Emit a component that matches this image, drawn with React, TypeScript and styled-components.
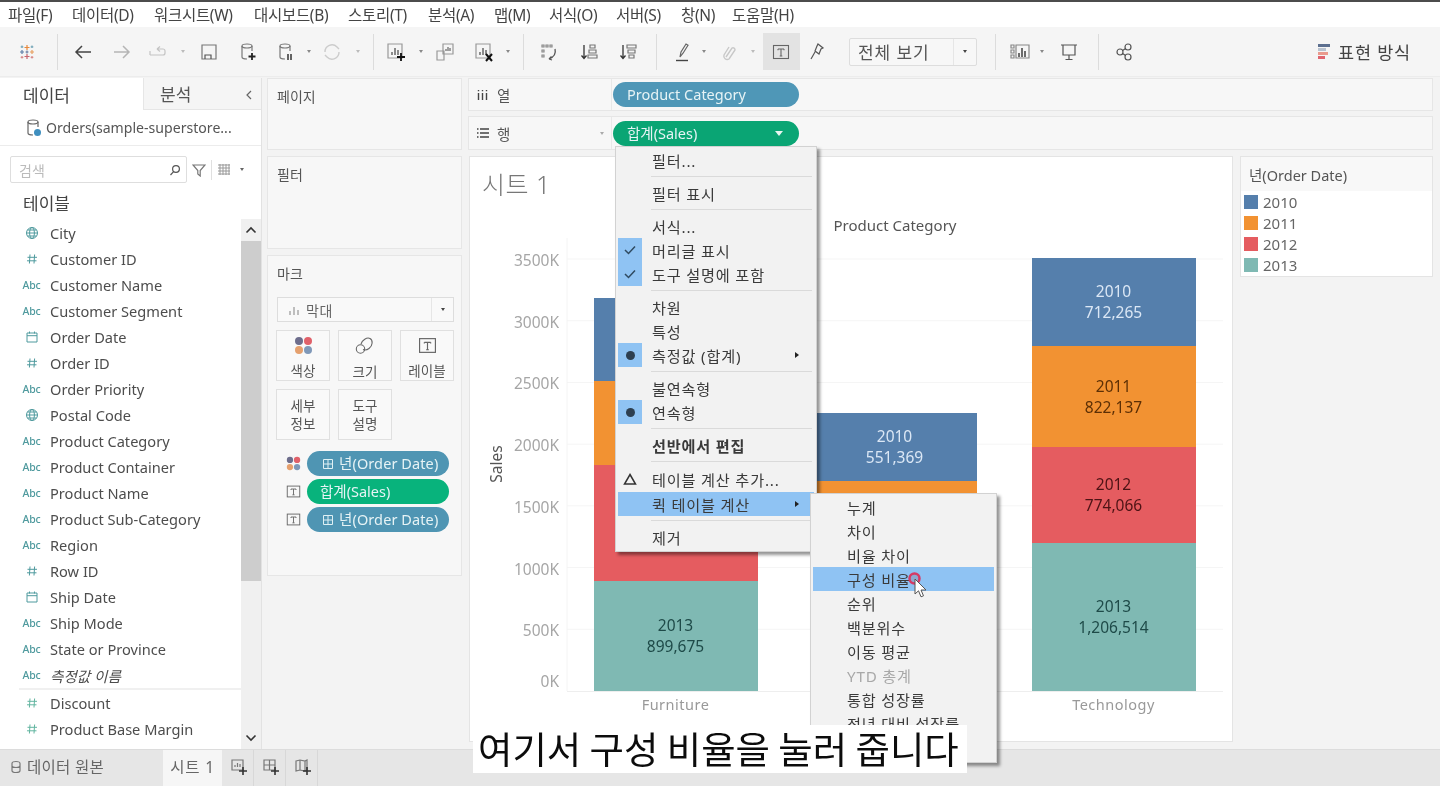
import React from "react";
import styled, { createGlobalStyle } from "styled-components";

const FONT = `"Noto Sans", "Noto Sans CJK KR", sans-serif`;
const C = { blue: "#557fac", orange: "#f29232", red: "#e55c60", teal: "#7fb9b3" };

const Global = createGlobalStyle`
  html, body { margin: 0; padding: 0; background: #f3f3f3; }
  * { box-sizing: border-box; }
  #root { width: 1440px; height: 786px; overflow: hidden; }
`;

const Page = styled.div`
  position: relative; width: 1440px; height: 786px; overflow: hidden;
  display: flex; flex-direction: column; background: #f3f3f3;
  font-family: ${FONT}; color: #444; border-top: 2px solid #4c4c4c;
  filter: blur(0.4px);
`;

/* ---------- menu bar ---------- */
const MenuBar = styled.div`
  height: 25px; background: #fff; display: flex; align-items: center; padding-left: 8px; flex: none;
`;
const MenuItem = styled.span<{ $w: number }>`
  width: ${p => p.$w}px; font-size: 15.5px; color: #444; white-space: nowrap; flex: none; letter-spacing: -0.3px;
`;

/* ---------- toolbar ---------- */
const Toolbar = styled.div`
  height: 50px; flex: none; background: #f5f5f5; display: flex; align-items: center; padding-left: 8px;
  border-bottom: 1px solid #ececec;
`;
const Slot = styled.div<{ $w: number }>`
  width: ${p => p.$w}px; height: 37px; flex: none; display: flex; align-items: center; justify-content: center;
  svg { flex: none; }
`;
const ActiveTool = styled.div`
  width: 37px; height: 37px; flex: none; background: #e3e3e3; display: flex; align-items: center; justify-content: center;
`;
const ToolSep = styled.div`width: 1px; height: 36px; background: #dcdcdc; flex: none;`;
const TinyCaret = styled.span<{ $c?: string; $ml?: number }>`
  width: 0; height: 0; flex: none; border-left: 2.5px solid transparent; border-right: 2.5px solid transparent;
  border-top: 3px solid ${p => p.$c || "#888"}; margin-left: ${p => p.$ml ?? 0}px;
`;
const FitSelect = styled.div`
  width: 128px; height: 28px; margin-left: 19px; flex: none; background: #f7f7f7; border: 1px solid #ddd; border-radius: 2px;
  display: flex; align-items: center; font-size: 17px; color: #555; letter-spacing: 0.9px;
`;
const FitLabel = styled.span`flex: 1; padding-left: 8px; padding-bottom: 1px;`;
const FitArrow = styled.span`
  width: 23px; height: 100%; border-left: 1px solid #e6e6e6; display: flex; align-items: center; justify-content: center;
`;
const ShowMe = styled.div`
  margin-left: auto; margin-right: 29px; display: flex; align-items: center; gap: 8px;
  font-size: 17.5px; color: #444; letter-spacing: 0.8px;
`;

/* ---------- body ---------- */
const Body = styled.div`flex: 1; display: flex; min-height: 0; padding-top: 1px;`;

const Sidebar = styled.aside`
  width: 262px; flex: none; background: #fff; border-right: 1px solid #e2e2e2; display: flex; flex-direction: column;
`;
const Tabs = styled.div`display: flex; height: 32px; flex: none;`;
const TabA = styled.div`
  width: 143px; padding-left: 23px; font-size: 17px; color: #444; line-height: 35px;
`;
const TabB = styled.div`
  flex: 1; background: #f5f5f5; border-left: 1px solid #e6e6e6; border-bottom: 1px solid #e6e6e6;
  padding-left: 16px; padding-right: 7px; font-size: 17px; color: #555; line-height: 34px; padding-top: 2px;
  display: flex; justify-content: space-between; align-items: center;
`;
const Source = styled.div`
  height: 36px; flex: none; border-bottom: 1px solid #ececec; display: flex; align-items: center;
  padding-left: 24px; gap: 2px; font-size: 14.1px; color: #555; white-space: nowrap;
`;
const SearchRow = styled.div`
  height: 44px; flex: none; display: flex; align-items: center; padding-left: 10px; padding-top: 3px;
`;
const SearchBox = styled.div`
  width: 177px; height: 27px; border: 1px solid #dedede; border-radius: 2px; display: flex; align-items: center;
  justify-content: space-between; padding: 0 5px 0 8px; font-size: 14px; color: #bbb;
`;
const SearchTools = styled.div`display: flex; align-items: center; margin-left: 5px;`;
const VSep = styled.span`width: 1px; height: 20px; background: #e0e0e0; margin: 0 6px 0 5px;`;
const TableHead = styled.div`
  height: 30px; flex: none; padding-left: 23px; font-size: 17px; color: #444; line-height: 28px;
`;
const ListWrap = styled.div`flex: 1; display: flex; min-height: 0;`;
const List = styled.div`width: 241px; flex: none;`;
const Field = styled.div<{ $it?: boolean }>`
  height: 26px; display: flex; align-items: center; font-size: 14.6px; color: #4d4d4d; white-space: nowrap;
  font-style: ${p => (p.$it ? "italic" : "normal")};
`;
const TypeIcon = styled.span<{ $c?: string }>`
  width: 50px; flex: none; padding-left: 23px; padding-right: 10px; display: flex; justify-content: center;
  align-items: center; font-size: 10.5px; font-style: normal; font-weight: 500; color: ${p => p.$c || "#4f9a9e"};
  letter-spacing: -0.2px;
`;
const ListRule = styled.div`height: 2px; background: #f0f0f0; margin-left: 19px;`;
const ScrollTrack = styled.div`
  width: 20px; flex: none; background: #f0f0f0; display: flex; flex-direction: column; margin-top: -1px;
`;
const ScrollBtn = styled.div<{ $end?: boolean }>`
  height: 22px; flex: none; display: flex; align-items: center; justify-content: center;
  margin-top: ${p => (p.$end ? "auto" : "0")};
`;
const ScrollThumb = styled.div`height: 340px; flex: none; background: #cdcdcd;`;

const ShelfCol = styled.div`
  width: 195px; flex: none; margin-left: 5px; display: flex; flex-direction: column; gap: 6px;
`;
const Card = styled.section<{ $h: number }>`
  height: ${p => p.$h}px; flex: none; background: #f7f7f7; border: 1px solid #e6e6e6;
  padding: 9px 9px; font-size: 14px; color: #555;
`;
const CardTitle = styled.div`line-height: 18px;`;
const MarkSelect = styled.div`
  margin-top: 14px; margin-right: -2px; height: 25px; background: #f9f9f9; border: 1px solid #ddd; display: flex; align-items: center;
  font-size: 14px; color: #666;
`;
const MarkName = styled.span`flex: 1; display: flex; align-items: center; gap: 6px; padding-left: 10px; letter-spacing: .5px;`;
const MarkArrow = styled.span`width: 22px; height: 100%; border-left: 1px solid #e6e6e6; display: flex; align-items: center; justify-content: center;`;
const MarkGrid = styled.div`
  display: grid; grid-template-columns: repeat(3, 54px); grid-auto-rows: 51px; column-gap: 8px; row-gap: 8px; margin-top: 8px; margin-left: -1px;
`;
const MarkBtn = styled.div`
  background: #f9f9f9; border: 1px solid #e0e0e0; display: flex; flex-direction: column; align-items: center;
  justify-content: center; font-size: 13.5px; color: #555; line-height: 18px; text-align: center;
`;
const MarkIconWrap = styled.div`height: 20px; margin-top: 5px; margin-bottom: 7px; display: flex; align-items: center; justify-content: center;`;
const MarkPills = styled.div`display: flex; flex-direction: column; gap: 3px; margin-top: 11px;`;
const MarkRow = styled.div`display: flex; align-items: center; gap: 6px; padding-left: 9px;`;
const Pill = styled.div<{ $bg: string; $w: number; $pl?: number }>`
  width: ${p => p.$w}px; height: 25px; background: ${p => p.$bg}; border-radius: 13px; flex: none;
  color: #e6f3f5; font-size: 14.5px; display: flex; align-items: center; padding-left: ${p => p.$pl ?? 14}px; padding-bottom: 2px; white-space: nowrap; gap: 5px;
`;
const PillIcon = styled.span`display: flex; padding-top: 2px;`;
const PillText = styled.span`letter-spacing: .1px;`;

const RightCol = styled.div`
  width: 965px; flex: none; margin-left: 6px; display: flex; flex-direction: column;
`;
const ShelfRow = styled.div<{ $h: number; $mb: number }>`
  height: ${p => p.$h}px; margin-bottom: ${p => p.$mb}px; flex: none; background: #f7f7f7; border: 1px solid #e6e6e6; display: flex;
`;
const ShelfLabel = styled.div`
  width: 143px; flex: none; border-right: 1px solid #e8e8e8; display: flex; align-items: center; padding-left: 7px; gap: 7px;
  font-size: 14.5px; color: #555;
`;
const ShelfCaret = styled.span`margin-left: auto; margin-right: 7px; display: flex;`;
const ShelfBody = styled.div`flex: 1; display: flex; align-items: center; padding-left: 1px;`;
const PillCaret = styled.span`
  margin-left: auto; margin-right: 16px; margin-top: 2px; width: 0; height: 0; border-left: 4px solid transparent; border-right: 4px solid transparent;
  border-top: 5px solid #e8f5f0;
`;

const ViewRow = styled.div`display: flex; gap: 7px; align-items: flex-start; padding-left: 1px;`;
const ViewCard = styled.section`
  width: 764px; height: 586px; flex: none; background: #fff; border: 1px solid #e4e4e4; display: flex; flex-direction: column;
`;
const SheetTitle = styled.h1`
  margin: 0; height: 48px; flex: none; padding: 7px 0 0 12px; font-size: 25px; line-height: 40px; font-weight: 300; color: #777; letter-spacing: .5px;
`;
const ChartSvg = styled.svg`width: 762px; height: 536px; display: block; font-family: ${FONT};`;
const BarText = styled.text<{ $c: string }>`font-size: 15.5px; fill: ${p => p.$c}; text-anchor: middle;`;
const AxisText = styled.text`font-size: 15.5px; fill: #a6a6a6; text-anchor: end;`;
const CatText = styled.text`font-size: 14.5px; fill: #999; text-anchor: middle; letter-spacing: .5px;`;
const HeadText = styled.text`font-size: 15px; fill: #555; text-anchor: middle;`;
const RotText = styled.text`font-size: 15.5px; fill: #555; text-anchor: middle;`;

const Legend = styled.section`
  width: 193px; height: 121px; flex: none; background: #fff; border: 1px solid #e4e4e4;
`;
const LegendHead = styled.div`
  height: 34px; background: #f8f8f8; padding-left: 8px; font-size: 14.5px; color: #555; line-height: 36px;
`;
const LegendRow = styled.div`height: 21px; display: flex; align-items: center; gap: 5px; padding-left: 3px; font-size: 15px; color: #666;`;
const Swatch = styled.span<{ $c: string }>`width: 14px; height: 14px; background: ${p => p.$c}; flex: none;`;

/* ---------- bottom tabs ---------- */
const BottomBar = styled.div`
  height: 37px; flex: none; background: #e6e6e6; border-top: 1px solid #dcdcdc; display: flex; align-items: center; font-size: 15.5px; color: #666;
`;
const SourceTab = styled.div`width: 163px; height: 100%; display: flex; align-items: center; gap: 5px; padding-left: 10px; padding-bottom: 3px; letter-spacing: .3px;`;
const SheetTab = styled.div`width: 59px; height: 100%; background: #f6f6f6; display: flex; align-items: center; justify-content: center; padding-bottom: 3px; letter-spacing: .8px;`;
const AddTab = styled.div`width: 32px; height: 100%; border-right: 1px solid #d8d8d8; display: flex; align-items: center; justify-content: center; padding: 0 0 2px 2px;`;

/* ---------- overlays ---------- */
const PopMenu = styled.div<{ $x: number; $y: number; $w: number; $h: number }>`
  position: absolute; left: ${p => p.$x}px; top: ${p => p.$y}px; width: ${p => p.$w}px; height: ${p => p.$h}px;
  background: #f2f2f2; border: 1px solid #d2d2d2; box-shadow: 3px 3px 3px rgba(0,0,0,.42); overflow: hidden;
  padding: 1px 2px; font-size: 15.2px; color: #3a3a3a; letter-spacing: .8px;
`;
const MRow = styled.div<{ $hl?: boolean; $pad?: number; $dim?: boolean; $bold?: boolean; $mt?: number }>`
  height: 24px; display: flex; align-items: center; background: ${p => (p.$hl ? "#8fc3f3" : "transparent")};
  padding-left: ${p => p.$pad ?? 0}px; padding-right: 15px; white-space: nowrap; margin-top: ${p => p.$mt ?? 0}px;
  color: ${p => (p.$dim ? "#a8a8a8" : "inherit")}; font-weight: ${p => (p.$bold ? 700 : 400)};
`;
const MText = styled.span`padding-bottom: 1px;`;
const Mark = styled.span<{ $on?: boolean }>`
  width: 24px; height: 24px; flex: none; margin-right: 10px; background: ${p => (p.$on ? "#8fc3f3" : "transparent")};
  display: flex; align-items: center; justify-content: center;
`;
const Dot = styled.span`width: 9px; height: 9px; border-radius: 50%; background: #2d3f50;`;
const SubArrow = styled.span`
  margin-left: auto; width: 0; height: 0; border-top: 3.5px solid transparent; border-bottom: 3.5px solid transparent; border-left: 4px solid #222;
`;
const MSep = styled.div`height: 9px; display: flex; align-items: center; margin-left: 33px; margin-right: 2px;`;
const MSepLine = styled.span`display: block; width: 100%; height: 1px; background: #dadada;`;
const Caption = styled.div`
  position: absolute; left: 473px; top: 723px; width: 494px; height: 48px; background: #fff; color: #0c0c0c;
  font-size: 37.4px; font-weight: 400; line-height: 46px; padding-left: 5px; white-space: nowrap; font-family: "Noto Sans CJK KR", sans-serif;
`;
const CursorOverlay = styled.svg`position: absolute; left: 905px; top: 566px; width: 30px; height: 34px;`;

/* ---------- icons ---------- */
const Ico: React.FC<{ w?: number; h?: number; children: React.ReactNode }> = ({ w = 20, h = 20, children }) => (
  <svg width={w} height={h} viewBox={`0 0 ${w} ${h}`} fill="none" stroke="#777" strokeWidth="1.2">{children}</svg>
);
const Cyl = ({ c = "#777" }: { c?: string }) => (
  <g stroke={c}><ellipse cx="8" cy="4" rx="5" ry="2" /><path d="M3 4v11c0 1.2 2.2 2 5 2M13 4v5" /></g>
);
const Logo = () => (
  <Ico>
    <g strokeWidth="1.2">
      <path d="M10 3v5M7.5 5.5h5" stroke="#e8883a" />
      <path d="M10 12v5M7.5 14.5h5" stroke="#c7656f" />
      <path d="M5 8v4M3 10h4" stroke="#5f7fa8" />
      <path d="M15 8v4M13 10h4" stroke="#e8a060" />
      <path d="M10 8.5v3M8.5 10h3" stroke="#6a7fa5" />
      <path d="M5 3.5v2.6M3.7 4.8h2.6M15 3.5v2.6M13.7 4.8h2.6" stroke="#76a7b8" />
      <path d="M5 14v2.6M3.7 15.3h2.6M15 14v2.6M13.7 15.3h2.6" stroke="#d78a8a" />
    </g>
  </Ico>
);
const Arrow = ({ left, c }: { left?: boolean; c: string }) => (
  <Ico>
    <path stroke={c} strokeWidth="1.5" d={left ? "M18 10H3M9 4l-6 6 6 6" : "M2 10h15M11 4l6 6-6 6"} />
  </Ico>
);
const Swap = () => (
  <Ico><path stroke="#c4c4c4" d="M2 13h13a2 2 0 0 0 2-2V9a2 2 0 0 0-2-2H9M9 7l3-2.500M9 7l3 2.500M2 13V9" /></Ico>
);
const SaveI = () => (
  <Ico><path d="M3 3h14v14H3z" /><path d="M6 17v-4h6v4" stroke="#555" /></Ico>
);
const DbPlus = () => (
  <Ico><g transform="translate(1 0)"><Cyl /></g><path stroke="#222" strokeWidth="1.8" d="M14 11v7M10.5 14.5h7" /></Ico>
);
const DbPause = () => (
  <Ico><g transform="translate(1 0)"><Cyl /></g><path stroke="#333" strokeWidth="1.5" d="M12 12v6M15 12v6" /></Ico>
);
const Refresh = () => (
  <Ico><path stroke="#ccc" strokeWidth="1.4" d="M3 10a7 7 0 0 1 12-5l2 2M17 10a7 7 0 0 1-12 5l-2-2" /></Ico>
);
const ChartPlus = () => (
  <Ico><path d="M2 2h14v14H2z" stroke="#999" /><path stroke="#444" d="M6 13v-3M9 13V6M12 13V8" /><path stroke="#111" strokeWidth="1.8" d="M15 11v8M11 15h8" /></Ico>
);
const Dup = () => (
  <Ico><path stroke="#999" d="M8 2h10v10H8zM2 9h7v9H2z" /><path stroke="#666" d="M11 9V7M13 9V5M15 9V6" /></Ico>
);
const ChartX = () => (
  <Ico><path d="M2 2h14v14H2z" stroke="#999" /><path stroke="#444" d="M6 13v-3M9 13V6M12 13V8" /><path stroke="#111" strokeWidth="2" d="M12 12l6 7M18 12l-6 7" /></Ico>
);
const GroupI = () => (
  <Ico>
    <path stroke="#888" d="M3 3h2v2H3zM7 3h2v2H7zM11 3h2v2h-2zM3 8h2v2H3zM3 13h2v2H3z" />
    <path stroke="#555" strokeWidth="1.3" d="M16 7c1 4-1 8-6 10M10 17l2.5-2.5M10 17l3 1" />
  </Ico>
);
const SortAsc = () => (
  <Ico><path stroke="#333" strokeWidth="1.3" d="M5 3v13M2.5 13.5L5 16.5l2.5-3" /><path stroke="#777" d="M11 3h5v3h-5zM10 8h7v3h-7zM9 13h9v3H9z" /></Ico>
);
const SortDesc = () => (
  <Ico><path stroke="#333" strokeWidth="1.3" d="M5 3v13M2.5 13.5L5 16.5l2.5-3" /><path stroke="#777" d="M9 3h9v3H9zM10 8h7v3h-7zM11 13h5v3h-5z" /></Ico>
);
const Hilite = () => (
  <Ico><path stroke="#666" d="M7 15l1-5 5-8 2 1.2-5 8-3 3.8z" /><path stroke="#444" strokeWidth="1.4" d="M3 18.5h12" /></Ico>
);
const Clip = () => (
  <Ico><path stroke="#c8c8c8" strokeWidth="1.4" d="M7 15l6-9a2 2 0 0 1 3 2l-6 9a3.4 3.4 0 0 1-5-4l5-8" /></Ico>
);
const TBox = ({ s = 18, c = "#666" }: { s?: number; c?: string }) => (
  <svg width={s} height={s} viewBox="0 0 18 18" fill="none" stroke={c}>
    <rect x="1.5" y="2.5" width="15" height="13" strokeWidth="1.1" />
    <path d="M6 6h6M9 6v7M7.7 13h2.6M6 6v1.2M12 6v1.2" strokeWidth="1.1" />
  </svg>
);
const PinI = () => (
  <Ico><path stroke="#555" d="M11 2l5 4-2 1-2 5-4-3 2-5zM8 10l-4 7" /></Ico>
);
const BarsI = () => (
  <Ico w={22} h={20}>
    <path stroke="#888" d="M2 3h3v3H2zM2 8h3v3H2zM2 13h3v3H2zM7 3h13v13H7z" />
    <path stroke="#333" strokeWidth="1.4" d="M10 15v-4M13 15V6M16 15V9" />
  </Ico>
);
const Present = () => (
  <Ico><path stroke="#555" d="M2 3h16M4 3v10h12V3M10 13v4M6.5 17.5h7" /></Ico>
);
const Share = () => (
  <Ico><circle cx="5" cy="10" r="3" stroke="#555" /><circle cx="13" cy="5" r="3" stroke="#555" /><circle cx="13" cy="15" r="3" stroke="#555" /><path stroke="#555" d="M7.6 8.5l3-2M7.6 11.5l3 2" /></Ico>
);
const ShowMeI = () => (
  <svg width="12" height="18" viewBox="0 0 12 18">
    <rect x="0" y="1" width="12" height="3" fill="#5c6f8f" />
    <rect x="0" y="5" width="8" height="3" fill="#b9c3d0" />
    <rect x="0" y="9" width="10" height="3" fill="#ea9a8d" />
    <rect x="0" y="13" width="7" height="3" fill="#e0656f" />
  </svg>
);
const Globe = () => (
  <Ico w={14} h={14}>
    <g stroke="#4f9a9e" strokeWidth="1">
      <circle cx="7" cy="7" r="5.5" /><ellipse cx="7" cy="7" rx="2.4" ry="5.5" /><path d="M1.5 7h11M2.4 4h9.2M2.4 10h9.2" />
    </g>
  </Ico>
);
const Hash = ({ c = "#4f9a9e" }: { c?: string }) => (
  <Ico w={12} h={12}><path stroke={c} strokeWidth="1" d="M4 1.5L3.4 10.5M8.6 1.5L8 10.5M1.5 4.3h9.5M1 7.8h9.5" /></Ico>
);
const Cal = () => (
  <Ico w={14} h={14}><path stroke="#4f9a9e" strokeWidth="1" d="M2 3h10v9H2zM2 5.7h10M4.5 1.5v2M9.5 1.5v2" /></Ico>
);
const SearchI = () => (
  <Ico w={12} h={12}><circle cx="7" cy="5" r="3.4" stroke="#555" /><path stroke="#555" d="M4.6 7.6L1.5 11" /></Ico>
);
const FunnelI = () => (
  <Ico w={14} h={14}><path stroke="#777" d="M1 2h12L8.2 7.5V13L5.8 11V7.5z" /></Ico>
);
const GridI = () => (
  <Ico w={13} h={11}><path stroke="#999" strokeWidth="1" d="M0 1h12M0 4h12M0 7h12M0 10h12M2 0v11M5 0v11M8 0v11M11 0v11" /></Ico>
);
const DotsI = ({ s = 19 }: { s?: number }) => (
  <svg width={s} height={s} viewBox="0 0 19 19">
    <circle cx="5" cy="5" r="4" fill="#6d6d8c" /><circle cx="14" cy="5" r="4" fill="#e0616a" />
    <circle cx="5" cy="14" r="4" fill="#e5a06e" /><circle cx="14" cy="14" r="4" fill="#7f98b8" />
  </svg>
);
const SizeI = () => (
  <svg width="20" height="20" viewBox="0 0 20 20" fill="none" stroke="#666" strokeWidth="1.1">
    <path d="M6 8c1-4 6-7 9-5.500s3 7-1 10c-2 1.500-4 2-6 1" /><circle cx="5.500" cy="13" r="4.200" />
  </svg>
);
const PlusBox = () => (
  <svg width="12" height="12" viewBox="0 0 12 12" fill="none" stroke="#dff0f4" strokeWidth="1"><path d="M1.500 1.500h9v9h-9zM6 1.500v9M1.500 6h9" /></svg>
);
const Chev = ({ up }: { up?: boolean }) => (
  <Ico w={12} h={8}><path stroke="#333" strokeWidth="1.6" d={up ? "M1.500 6.500L6 2l4.500 4.500" : "M1.500 1.500L6 6l4.500-4.500"} /></Ico>
);
const SheetAdd = ({ kind }: { kind: "w" | "d" | "s" }) => (
  <Ico w={18} h={18}>
    {kind === "w" && <path stroke="#777" d="M2 2h11v10H2zM5 9V7M7.500 9V5M10 9V6" />}
    {kind === "d" && <path stroke="#777" d="M2 2h11v10H2zM7.500 2v10M2 7h11" />}
    {kind === "s" && <path stroke="#777" d="M2 3l4-1 5 1 2-1v10l-2 1-5-1-4 1zM6 2v10M11 3v10" />}
    <path stroke="#333" strokeWidth="1.6" d="M13 9v8M9 13h8" />
  </Ico>
);
const ColIcon = () => (
  <Ico w={14} h={14}><path stroke="#444" strokeWidth="1.4" d="M2.500 5v7M6.500 5v7M10.500 5v7M2.500 2v1.200M6.500 2v1.200M10.500 2v1.200" /></Ico>
);
const RowIcon = () => (
  <Ico w={14} h={14}><path stroke="#444" strokeWidth="1.3" d="M4 3h9M4 7h9M4 11h9M1 3h1.500M1 7h1.500M1 11h1.500" /></Ico>
);
const SourceI = () => (
  <Ico w={20} h={20}>
    <g transform="translate(1 0)"><Cyl c="#666" /></g>
    <circle cx="13.500" cy="14.500" r="3.500" fill="#3f8fbf" stroke="none" />
  </Ico>
);
const Check = () => (
  <Ico w={14} h={12}><path stroke="#2f4a60" strokeWidth="1.500" d="M2 6l3.500 3.500L12 2.500" /></Ico>
);
const Delta = () => (
  <Ico w={14} h={12}><path stroke="#333" strokeWidth="1.500" d="M7 1.500L12.500 11h-11z" /></Ico>
);
const BarMini = () => (
  <Ico w={12} h={12}><path stroke="#aaa" strokeWidth="1.500" d="M2 11V7M6 11V3M10 11V6" /></Ico>
);

/* ---------- data ---------- */
const menus: [string, number][] = [
  ["파일(F)", 64], ["데이터(D)", 82], ["워크시트(W)", 100], ["대시보드(B)", 94], ["스토리(T)", 80],
  ["분석(A)", 66], ["맵(M)", 55], ["서식(O)", 67], ["서버(S)", 65], ["창(N)", 51], ["도움말(H)", 80],
];
type F = { n: string; t: "abc" | "geo" | "num" | "date"; it?: boolean };
const fields: F[] = [
  { n: "City", t: "geo" }, { n: "Customer ID", t: "num" }, { n: "Customer Name", t: "abc" },
  { n: "Customer Segment", t: "abc" }, { n: "Order Date", t: "date" }, { n: "Order ID", t: "num" },
  { n: "Order Priority", t: "abc" }, { n: "Postal Code", t: "geo" }, { n: "Product Category", t: "abc" },
  { n: "Product Container", t: "abc" }, { n: "Product Name", t: "abc" }, { n: "Product Sub-Category", t: "abc" },
  { n: "Region", t: "abc" }, { n: "Row ID", t: "num" }, { n: "Ship Date", t: "date" }, { n: "Ship Mode", t: "abc" },
  { n: "State or Province", t: "abc" }, { n: "측정값 이름", t: "abc", it: true },
];
const FieldRow = ({ f }: { f: F }) => (
  <Field $it={f.it}>
    <TypeIcon>
      {f.t === "abc" && "Abc"}{f.t === "geo" && <Globe />}{f.t === "num" && <Hash />}{f.t === "date" && <Cal />}
    </TypeIcon>
    {f.n}
  </Field>
);

const yFor = (v: number) => 691 - (v / 3500) * 432;
const ticks = [3500, 3000, 2500, 2000, 1500, 1000, 500];
type Seg = { top: number; bot: number; c: string; tc: string; lab?: [string, string]; ly?: number };
const BLUE_T = "#dbe7f5", OR_T = "#5c2f05", RED_T = "#4d1315", TEAL_T = "#1e4a48";
const bars: { x: number; segs: Seg[] }[] = [
  {
    x: 594, segs: [
      { top: 298, bot: 381, c: C.blue, tc: BLUE_T },
      { top: 381, bot: 465, c: C.orange, tc: OR_T },
      { top: 465, bot: 581, c: C.red, tc: RED_T },
      { top: 581, bot: 691, c: C.teal, tc: TEAL_T, lab: ["2013", "899,675"], ly: 631 },
    ],
  },
  {
    x: 813, segs: [
      { top: 413, bot: 481, c: C.blue, tc: BLUE_T, lab: ["2010", "551,369"], ly: 442 },
      { top: 481, bot: 560, c: C.orange, tc: OR_T },
    ],
  },
  {
    x: 1032, segs: [
      { top: 258, bot: 346, c: C.blue, tc: BLUE_T, lab: ["2010", "712,265"], ly: 297 },
      { top: 346, bot: 447, c: C.orange, tc: OR_T, lab: ["2011", "822,137"], ly: 392 },
      { top: 447, bot: 543, c: C.red, tc: RED_T, lab: ["2012", "774,066"], ly: 490 },
      { top: 543, bot: 691, c: C.teal, tc: TEAL_T, lab: ["2013", "1,206,514"], ly: 612 },
    ],
  },
];

const Chart = () => (
  <ChartSvg viewBox="470 205 762 536">
    {ticks.map(t => <line key={t} x1="567" x2="1223" y1={yFor(t)} y2={yFor(t)} stroke="#f5f5f5" />)}
    <line x1="567" x2="1223" y1="691.500" y2="691.500" stroke="#eeeeee" />
    <line x1="567" x2="567" y1="238" y2="691" stroke="#f4f4f4" />
    {bars.map(b => b.segs.map(s => (
      <React.Fragment key={b.x + s.c}>
        <rect x={b.x} y={s.top} width="164" height={s.bot - s.top} fill={s.c} />
        {s.lab && s.ly && <>
          <BarText $c={s.tc} x={b.x + 81.500} y={s.ly}>{s.lab[0]}</BarText>
          <BarText $c={s.tc} x={b.x + 81.500} y={s.ly + 21}>{s.lab[1]}</BarText>
        </>}
      </React.Fragment>
    )))}
    {ticks.map(t => <AxisText key={t} x="559" y={yFor(t) + 7}>{t}K</AxisText>)}
    <AxisText x="559" y="687">0K</AxisText>
    <CatText x="675.500" y="710">Furniture</CatText>
    <CatText x="1113.500" y="710">Technology</CatText>
    <HeadText x="895" y="231">Product Category</HeadText>
    <RotText transform="translate(502 464) rotate(-90)">Sales</RotText>
  </ChartSvg>
);

const Sep = () => <MSep><MSepLine /></MSep>;
const SubSlot = ({ w, children }: { w: number; children?: React.ReactNode }) => <Slot $w={w}>{children}</Slot>;
const Item = ({ children, ...p }: React.ComponentProps<typeof MRow>) => <MRow {...p}><MText>{children}</MText></MRow>;

export default function App() {
  return (
    <Page>
      <Global />
      <MenuBar>{menus.map(([m, w]) => <MenuItem key={m} $w={w}>{m}</MenuItem>)}</MenuBar>

      <Toolbar>
        <SubSlot w={38}><Logo /></SubSlot>
        <SubSlot w={22}><ToolSep /></SubSlot>
        <SubSlot w={30}><Arrow left c="#444" /></SubSlot>
        <SubSlot w={48}><Arrow c="#b5b5b5" /></SubSlot>
        <SubSlot w={24}><Swap /></SubSlot>
        <SubSlot w={26}><TinyCaret $c="#bbb" /></SubSlot>
        <SubSlot w={26}><SaveI /></SubSlot>
        <SubSlot w={52}><DbPlus /></SubSlot>
        <SubSlot w={24}><DbPause /></SubSlot>
        <SubSlot w={22}><TinyCaret /></SubSlot>
        <SubSlot w={24}><Refresh /></SubSlot>
        <SubSlot w={28}><TinyCaret $c="#bbb" /></SubSlot>
        <SubSlot w={2}><ToolSep /></SubSlot>
        <SubSlot w={44}><ChartPlus /></SubSlot>
        <SubSlot w={6}><TinyCaret /></SubSlot>
        <SubSlot w={42}><Dup /></SubSlot>
        <SubSlot w={36}><ChartX /></SubSlot>
        <SubSlot w={12}><TinyCaret /></SubSlot>
        <SubSlot w={18}><ToolSep /></SubSlot>
        <SubSlot w={34}><GroupI /></SubSlot>
        <SubSlot w={46}><SortAsc /></SubSlot>
        <SubSlot w={32}><SortDesc /></SubSlot>
        <SubSlot w={24}><ToolSep /></SubSlot>
        <SubSlot w={30}><Hilite /></SubSlot>
        <SubSlot w={12}><TinyCaret /></SubSlot>
        <SubSlot w={38}><Clip /></SubSlot>
        <SubSlot w={10}><TinyCaret $c="#bbb" /></SubSlot>
        <SubSlot w={46}><ActiveTool><TBox /></ActiveTool></SubSlot>
        <SubSlot w={26}><PinI /></SubSlot>
        <FitSelect><FitLabel>전체 보기</FitLabel><FitArrow><TinyCaret $c="#444" /></FitArrow></FitSelect>
        <SubSlot w={36}><ToolSep /></SubSlot>
        <SubSlot w={14}><BarsI /></SubSlot>
        <SubSlot w={30}><TinyCaret /></SubSlot>
        <SubSlot w={24}><Present /></SubSlot>
        <SubSlot w={34}><ToolSep /></SubSlot>
        <SubSlot w={20}><Share /></SubSlot>
        <ShowMe><ShowMeI />표현 방식</ShowMe>
      </Toolbar>

      <Body>
        <Sidebar>
          <Tabs>
            <TabA>데이터</TabA>
            <TabB>분석<Ico w={10} h={12}><path stroke="#666" d="M7 2L3 6l4 4" /></Ico></TabB>
          </Tabs>
          <Source><SourceI />Orders(sample-superstore...</Source>
          <SearchRow>
            <SearchBox>검색<SearchI /></SearchBox>
            <SearchTools><FunnelI /><VSep /><GridI /><TinyCaret $c="#666" $ml={9} /></SearchTools>
          </SearchRow>
          <TableHead>테이블</TableHead>
          <ListWrap>
            <List>
              {fields.map(f => <FieldRow key={f.n} f={f} />)}
              <ListRule />
              <Field><TypeIcon><Hash c="#62b5a0" /></TypeIcon>Discount</Field>
              <Field><TypeIcon><Hash c="#62b5a0" /></TypeIcon>Product Base Margin</Field>
            </List>
            <ScrollTrack>
              <ScrollBtn><Chev up /></ScrollBtn>
              <ScrollThumb />
              <ScrollBtn $end><Chev /></ScrollBtn>
            </ScrollTrack>
          </ListWrap>
        </Sidebar>

        <ShelfCol>
          <Card $h={72}><CardTitle>페이지</CardTitle></Card>
          <Card $h={93}><CardTitle>필터</CardTitle></Card>
          <Card $h={321}>
            <CardTitle>마크</CardTitle>
            <MarkSelect><MarkName><BarMini />막대</MarkName><MarkArrow><TinyCaret $c="#444" /></MarkArrow></MarkSelect>
            <MarkGrid>
              <MarkBtn><MarkIconWrap><DotsI /></MarkIconWrap>색상</MarkBtn>
              <MarkBtn><MarkIconWrap><SizeI /></MarkIconWrap>크기</MarkBtn>
              <MarkBtn><MarkIconWrap><TBox s={19} /></MarkIconWrap>레이블</MarkBtn>
              <MarkBtn>세부<br />정보</MarkBtn>
              <MarkBtn>도구<br />설명</MarkBtn>
            </MarkGrid>
            <MarkPills>
              <MarkRow><DotsI s={15} /><Pill $bg="#4f95b3" $w={142} $pl={15}><PillIcon><PlusBox /></PillIcon><PillText>년(Order Date)</PillText></Pill></MarkRow>
              <MarkRow><TBox s={15} /><Pill $bg="#08b37c" $w={142} $pl={13}>합계(Sales)</Pill></MarkRow>
              <MarkRow><TBox s={15} /><Pill $bg="#4f95b3" $w={142} $pl={15}><PillIcon><PlusBox /></PillIcon><PillText>년(Order Date)</PillText></Pill></MarkRow>
            </MarkPills>
          </Card>
        </ShelfCol>

        <RightCol>
          <ShelfRow $h={33} $mb={5}>
            <ShelfLabel><ColIcon />열</ShelfLabel>
            <ShelfBody><Pill $bg="#4f97b7" $w={186}>Product Category</Pill></ShelfBody>
          </ShelfRow>
          <ShelfRow $h={34} $mb={6}>
            <ShelfLabel><RowIcon />행<ShelfCaret><TinyCaret $c="#aaa" /></ShelfCaret></ShelfLabel>
            <ShelfBody><Pill $bg="#0aa574" $w={186}>합계(Sales)<PillCaret /></Pill></ShelfBody>
          </ShelfRow>
          <ViewRow>
            <ViewCard>
              <SheetTitle>시트 1</SheetTitle>
              <Chart />
            </ViewCard>
            <Legend>
              <LegendHead>년(Order Date)</LegendHead>
              {[["2010", C.blue], ["2011", C.orange], ["2012", C.red], ["2013", C.teal]].map(([y, c]) => (
                <LegendRow key={y}><Swatch $c={c} />{y}</LegendRow>
              ))}
            </Legend>
          </ViewRow>
        </RightCol>
      </Body>

      <BottomBar>
        <SourceTab><Ico w={12} h={14}><path stroke="#777" d="M2 3.500a4 2 0 0 1 8 0v7a4 2 0 0 1-8 0zM2 5.500a4 2 0 0 0 8 0" /></Ico>데이터 원본</SourceTab>
        <SheetTab>시트 1</SheetTab>
        <AddTab><SheetAdd kind="w" /></AddTab>
        <AddTab><SheetAdd kind="d" /></AddTab>
        <AddTab><SheetAdd kind="s" /></AddTab>
      </BottomBar>

      <PopMenu $x={615} $y={144} $w={202} $h={406}>
        <Item $pad={34}>필터...</Item><Sep />
        <Item $pad={34}>필터 표시</Item><Sep />
        <Item $pad={34}>서식...</Item>
        <MRow><Mark $on><Check /></Mark><MText>머리글 표시</MText></MRow>
        <MRow><Mark $on><Check /></Mark><MText>도구 설명에 포함</MText></MRow><Sep />
        <Item $pad={34}>차원</Item>
        <Item $pad={34}>특성</Item>
        <MRow><Mark $on><Dot /></Mark><MText>측정값 (합계)</MText><SubArrow /></MRow><Sep />
        <Item $pad={34}>불연속형</Item>
        <MRow><Mark $on><Dot /></Mark><MText>연속형</MText></MRow><Sep />
        <Item $pad={34} $bold>선반에서 편집</Item><Sep />
        <MRow $mt={1}><Mark><Delta /></Mark><MText>테이블 계산 추가...</MText></MRow>
        <MRow $hl $pad={34} $mt={1}><MText>퀵 테이블 계산</MText><SubArrow /></MRow><Sep />
        <Item $pad={34}>제거</Item>
      </PopMenu>

      <PopMenu $x={810} $y={491} $w={187} $h={270}>
        <Item $pad={34}>누계</Item>
        <Item $pad={34}>차이</Item>
        <Item $pad={34}>비율 차이</Item>
        <Item $hl $pad={34}>구성 비율</Item>
        <Item $pad={34}>순위</Item>
        <Item $pad={34}>백분위수</Item>
        <Item $pad={34}>이동 평균</Item>
        <Item $pad={34} $dim>YTD 총계</Item>
        <Item $pad={34}>통합 성장률</Item>
        <Item $pad={34}>전년 대비 성장률</Item>
      </PopMenu>

      <CursorOverlay viewBox="0 0 30 34">
        <circle cx="9.500" cy="10.500" r="5" fill="#8fa8d0" stroke="#d63a66" strokeWidth="2.500" />
        <path d="M10 11v15l3.500-3.200 2.500 6 2.500-1-2.500-5.800h5z" fill="#fff" stroke="#555" strokeWidth="1" />
      </CursorOverlay>

      <Caption>여기서 구성 비율을 눌러 줍니다</Caption>
    </Page>
  );
}
